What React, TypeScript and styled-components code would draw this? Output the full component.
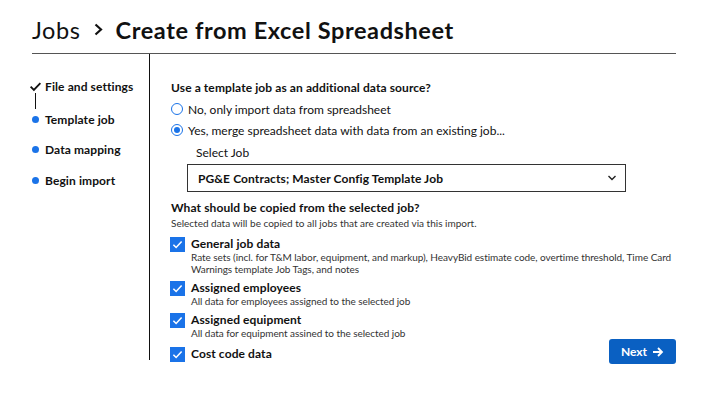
import React, { useState } from "react";
import styled, { createGlobalStyle } from "styled-components";

const GlobalStyle = createGlobalStyle`
    body {
        margin: 0;
        background: #ffffff;
        font-family: "Lato", "Liberation Sans", sans-serif;
        color: #111111;
    }
`;

const Page = styled.div`
    padding: 0 33px 34px 32px;
`;

const Header = styled.header`
    height: 54px;
    display: flex;
    align-items: center;
    border-bottom: 1px solid #555555;
    padding-top: 6px;
    box-sizing: border-box;
`;

const Title = styled.h1`
    margin: 0;
    font-size: 23.5px;
    font-weight: 400;
    letter-spacing: 0.6px;
    display: flex;
    align-items: center;
    gap: 12px;
    b {
        font-weight: 700;
    }
`;

const Body = styled.div`
    display: flex;
    height: 306px;
`;

const Sidebar = styled.nav`
    flex: none;
    width: 120px;
    border-right: 1px solid #111111;
    padding-top: 25px;
    box-sizing: border-box;
    margin-left: -2px;
`;

const Step = styled.div<{ $gap: number }>`
    display: flex;
    align-items: center;
    gap: 4px;
    height: 14px;
    margin-bottom: ${(p) => p.$gap}px;
    font-size: 12px;
    font-weight: 700;
    letter-spacing: 0.1px;
    white-space: nowrap;
`;

const Marker = styled.span`
    width: 11px;
    display: flex;
    justify-content: center;
    position: relative;
    svg {
        flex: none;
    }
`;

const Dot = styled.span`
    width: 7px;
    height: 7px;
    border-radius: 50%;
    background: #1a73e8;
`;

const Connector = styled.span`
    position: absolute;
    left: 5px;
    top: 13px;
    width: 1px;
    height: 16px;
    background: #111111;
`;

const Main = styled.main`
    flex: 1;
    padding: 27px 0 0 21px;
`;

const Question = styled.div`
    font-size: 12px;
    font-weight: 700;
    line-height: 14px;
    letter-spacing: 0.1px;
`;

const Hint = styled.div`
    font-size: 10px;
    line-height: 12px;
    color: #333333;
    margin-top: 2px;
`;

const RadioRow = styled.label`
    display: flex;
    align-items: center;
    gap: 5px;
    font-size: 12px;
    height: 14px;
    margin-top: 7px;
    cursor: pointer;
`;

const RadioCircle = styled.span<{ $on: boolean }>`
    width: 10px;
    height: 10px;
    border-radius: 50%;
    border: 1px solid #1a73e8;
    display: flex;
    align-items: center;
    justify-content: center;
    &::after {
        content: "";
        width: 6px;
        height: 6px;
        border-radius: 50%;
        background: ${(p) => (p.$on ? "#1a73e8" : "transparent")};
    }
`;

const SelectLabel = styled.div`
    font-size: 12px;
    margin: 8px 0 0 25px;
`;

const SelectBox = styled.div`
    margin: 4px 0 0 16px;
    width: 439px;
    height: 28px;
    box-sizing: border-box;
    border: 1px solid #333333;
    display: flex;
    align-items: center;
    justify-content: space-between;
    padding: 0 8px 0 10px;
    font-size: 12px;
    font-weight: 700;
    letter-spacing: 0.1px;
`;

const Section = styled.div`
    margin-top: 9px;
`;

const CheckRow = styled.label<{ $first?: boolean }>`
    display: flex;
    gap: 6px;
    margin-top: ${(p) => (p.$first ? 8 : 6)}px;
    cursor: pointer;
`;

const Box = styled.span<{ $on: boolean }>`
    width: 15px;
    height: 15px;
    flex: none;
    margin-left: -1px;
    background: ${(p) => (p.$on ? "#1a73e8" : "#ffffff")};
    border: ${(p) => (p.$on ? "none" : "1px solid #1a73e8")};
    box-sizing: border-box;
    display: flex;
    align-items: center;
    justify-content: center;
`;

const CheckText = styled.div`
    font-size: 12px;
    font-weight: 700;
    line-height: 14px;
    letter-spacing: 0.1px;
    span {
        display: block;
        font-size: 10px;
        font-weight: 400;
        line-height: 12px;
        letter-spacing: -0.05px;
        color: #333333;
    }
`;

const Footer = styled.div`
    display: flex;
    justify-content: space-between;
    align-items: flex-end;
`;

const NextButton = styled.button`
    margin-bottom: -2px;
    width: 67px;
    height: 25px;
    border: none;
    border-radius: 3px;
    background: #0a60c2;
    color: #ffffff;
    font-family: inherit;
    font-size: 12px;
    font-weight: 700;
    display: flex;
    align-items: center;
    justify-content: center;
    gap: 5px;
`;

const Check = ({ color = "#ffffff", size = 11 }: { color?: string; size?: number }) => (
    <svg width={size} height={size} viewBox="0 0 12 12" fill="none">
        <path d="M1.5 6.2 L4.5 9.2 L10.5 2.8" stroke={color} strokeWidth="1.7" />
    </svg>
);

const steps = ["File and settings", "Template job", "Data mapping", "Begin import"];

const options = [
    {
        id: "general",
        label: "General job data",
        desc: "Rate sets (incl. for T&M labor, equipment, and markup), HeavyBid estimate code, overtime threshold, Time Card Warnings template Job Tags, and notes",
    },
    { id: "employees", label: "Assigned employees", desc: "All data for employees assigned to the selected job" },
    { id: "equipment", label: "Assigned equipment", desc: "All data for equipment assined to the selected job" },
    { id: "costcode", label: "Cost code data", desc: "" },
];

function App() {
    const [merge, setMerge] = useState(true);
    const [checked, setChecked] = useState<Record<string, boolean>>({
        general: true,
        employees: true,
        equipment: true,
        costcode: true,
    });

    const renderOption = (o: (typeof options)[number], i: number) => (
        <CheckRow
            key={o.id}
            $first={i === 0}
            onClick={() => setChecked({ ...checked, [o.id]: !checked[o.id] })}
        >
            <Box $on={checked[o.id]}>{checked[o.id] && <Check />}</Box>
            <CheckText>
                {o.label}
                {o.desc && <span>{o.desc}</span>}
            </CheckText>
        </CheckRow>
    );

    const last = options.length - 1;

    return (
        <Page>
            <GlobalStyle />
            <Header>
                <Title>
                    Jobs
                    <svg width="11" height="13" viewBox="0 0 11 13" fill="none">
                        <path d="M2.5 1.5 L8 6.5 L2.5 11.5" stroke="#111" strokeWidth="2.2" />
                    </svg>
                    <b>Create from Excel Spreadsheet</b>
                </Title>
            </Header>
            <Body>
                <Sidebar>
                    {steps.map((s, i) => (
                        <Step key={s} $gap={i === 0 ? 19 : i === 1 ? 16 : 17}>
                            <Marker>
                                {i === 0 ? (
                                    <>
                                        <Check color="#111111" size={13} />
                                        <Connector />
                                    </>
                                ) : (
                                    <Dot />
                                )}
                            </Marker>
                            {s}
                        </Step>
                    ))}
                </Sidebar>
                <Main>
                    <Question>Use a template job as an additional data source?</Question>
                    <RadioRow onClick={() => setMerge(false)}>
                        <RadioCircle $on={!merge} />
                        No, only import data from spreadsheet
                    </RadioRow>
                    <RadioRow onClick={() => setMerge(true)}>
                        <RadioCircle $on={merge} />
                        Yes, merge spreadsheet data with data from an existing job...
                    </RadioRow>
                    <SelectLabel>Select Job</SelectLabel>
                    <SelectBox>
                        PG&amp;E Contracts; Master Config Template Job
                        <svg width="10" height="8" viewBox="0 0 10 8" fill="none">
                            <path d="M1.5 2 L5 5.5 L8.5 2" stroke="#222" strokeWidth="1.4" />
                        </svg>
                    </SelectBox>
                    <Section>
                        <Question>What should be copied from the selected job?</Question>
                        <Hint>Selected data will be copied to all jobs that are created via this import.</Hint>
                    </Section>
                    {options.slice(0, last).map(renderOption)}
                    <Footer>
                        {renderOption(options[last], last)}
                        <NextButton>
                            Next
                            <svg width="12" height="12" viewBox="0 0 12 12" fill="none">
                                <path d="M1 6 H10 M6 2 L10 6 L6 10" stroke="#fff" strokeWidth="1.8" />
                            </svg>
                        </NextButton>
                    </Footer>
                </Main>
            </Body>
        </Page>
    );
}

export default App;
